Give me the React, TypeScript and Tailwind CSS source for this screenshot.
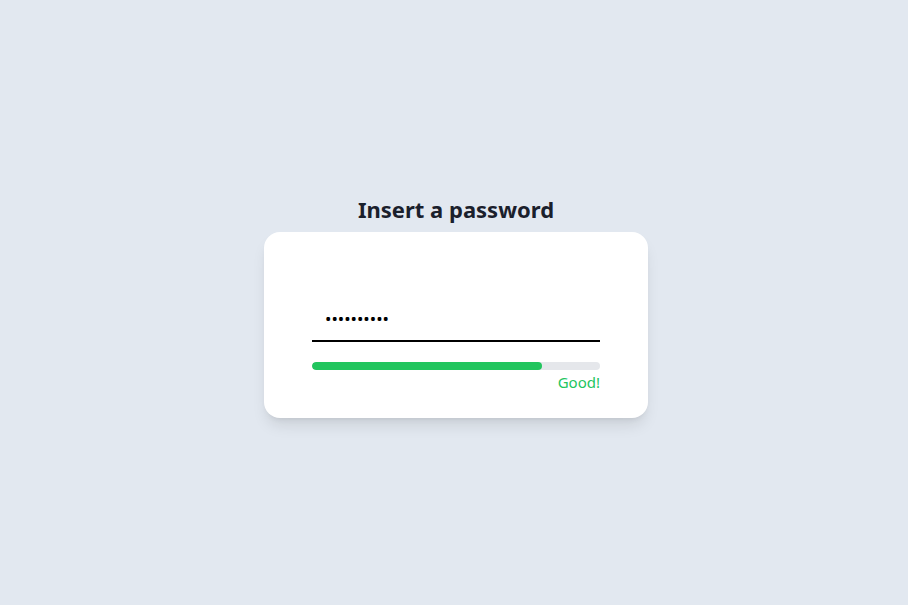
export default function App() {
  return (
    <div
      className="min-h-screen w-full bg-[#e2e8f0] flex flex-col items-center justify-center pt-[5px] pl-1"
      style={{ fontFamily: '"Noto Sans", "Open Sans", sans-serif' }}
    >
      <h1 className="text-[22px] leading-8 font-bold text-[#1a202c] mb-[7px]">
        Insert a password
      </h1>
      <div className="w-96 h-[186px] bg-white rounded-2xl shadow-lg px-12 pt-[62px]">
        <input
          type="password"
          defaultValue="abcdefghij"
          readOnly
          className="w-full h-12 pl-[13px] pt-1 text-[17px] text-black bg-transparent border-b-2 border-black outline-none"
        />
        <div className="mt-5 h-2 w-full rounded-full bg-[#e5e7eb] overflow-hidden">
          <div className="h-full w-4/5 rounded-full bg-[#22c55e]" />
        </div>
        <p className="mt-0.5 text-right text-[15px] leading-5 text-[#22c55e]">Good!</p>
      </div>
    </div>
  );
}
